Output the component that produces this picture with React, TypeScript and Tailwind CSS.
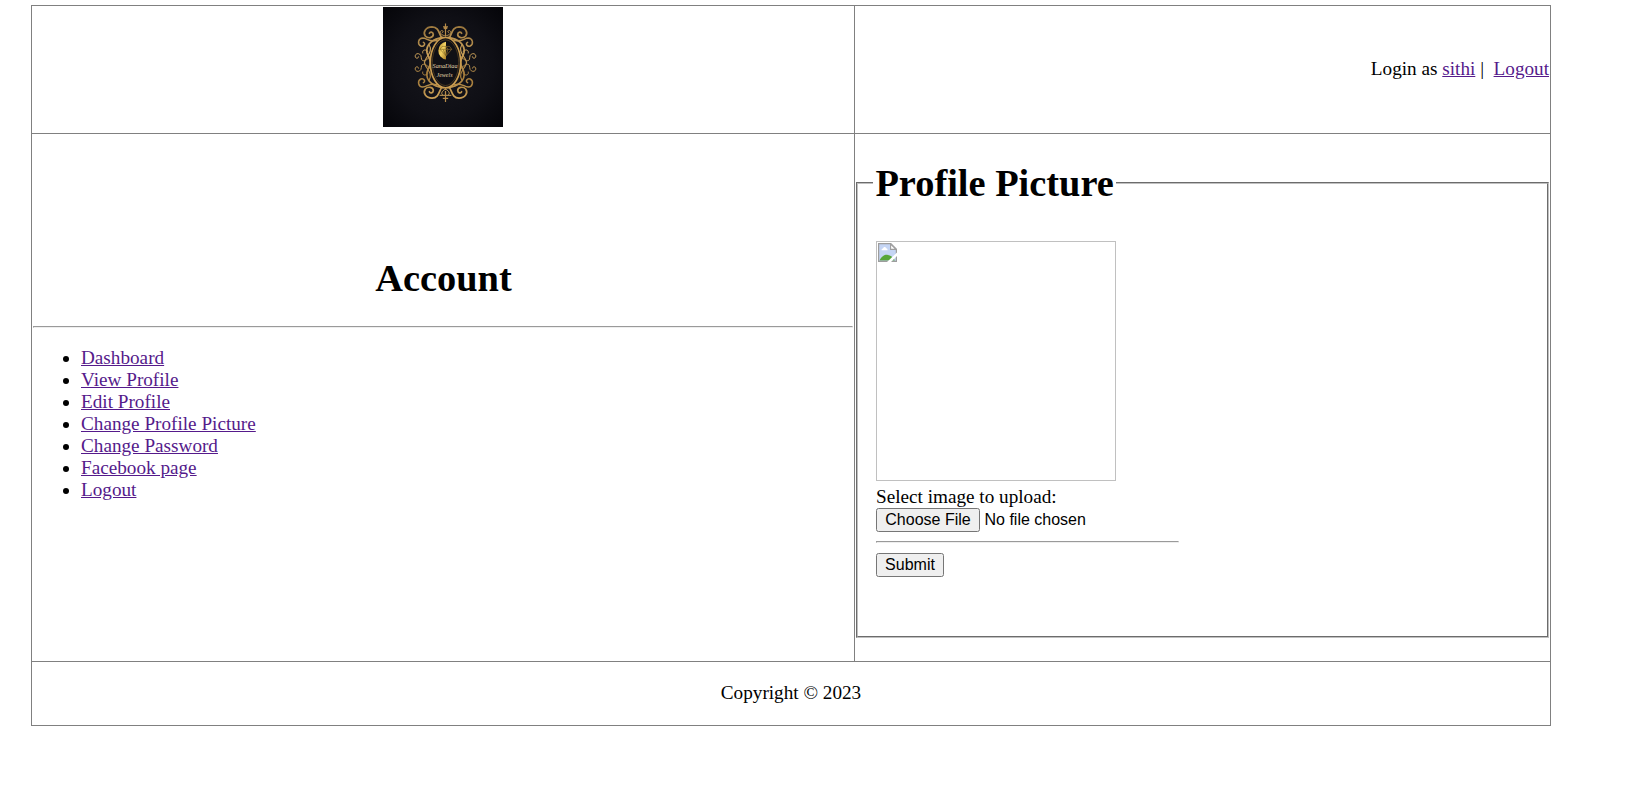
import React from "react";

const LINKS = [
  "Dashboard",
  "View Profile",
  "Edit Profile",
  "Change Profile Picture",
  "Change Password",
  "Facebook page",
  "Logout",
];

function Scrollwork() {
  return (
    <g fill="none" stroke="url(#gold)" strokeLinecap="round">
      {/* top corner curl */}
      <path strokeWidth="1.7" d="M59 31 C56 28 56.5 20 49 19.8 C43 19.8 39.5 25 42.3 29 C45 32 50.4 30.8 50.3 27.3 C50 24.6 47 24.5 46.4 26.3" />
      {/* shoulder curl */}
      <path strokeWidth="1.5" d="M54 33 C47 36 44 31 39.8 31 C35 31.3 34.2 37.2 37.8 39 C41 40 43 36.6 40.4 35.3" />
      <path strokeWidth="1.7" d="M60 30.3 C50 31.5 42.5 37.5 44 45.5 C45.2 50 47.3 52 47.3 55.5 C47.3 59 45.2 61 44 65.5 C42.5 73.5 50 79.5 60 80.7" />
      <path strokeWidth="1.2" d="M46 37.5 C51 45 41.5 50.5 41.5 55.5 C41.5 60.5 51 66 46 73.5" />
      {/* middle curls */}
      <path strokeWidth="1" d="M47 49.5 C42 55.5 38 54.5 38.3 50.5 C38.3 46.2 33 45.2 32.2 48.8 C32 51.8 35.5 52 35.6 49.8" />
      <path strokeWidth="1" d="M47 61.5 C42 55.5 38 56.5 38.3 60.5 C38.3 64.8 33 65.8 32.2 62.2 C32 59.2 35.5 59 35.6 61.2" />
      <path strokeWidth="1" d="M45 44.5 C42 41.5 39 43 39.7 46 M45 66.5 C42 69.5 39 68 39.7 65" />
      {/* lower curls */}
      <path strokeWidth="1.5" d="M54 78 C47 75 44 80 39.8 80 C35 79.7 34.2 73.8 37.8 72 C41 71 43 74.4 40.4 75.7" />
      <path strokeWidth="1.7" d="M59 80 C56 83 56.5 91 49 91.2 C43 91.2 39.5 86 42.3 82 C45 79 50.4 80.2 50.3 83.7 C50 86.4 47 86.5 46.4 84.7" />
      {/* crown curls */}
      <path strokeWidth="1" d="M62.7 29 C57 28 56 24.5 58.5 23.6 C60.5 23.2 60.6 25.6 59.3 25.6 M62.7 82 C59 83.5 57.5 87 59.5 87.8 M57 88.3 H62.7" />
    </g>
  );
}

function Logo() {
  return (
    <svg className="block" width="120" height="120" viewBox="0 0 120 120" role="img" aria-label="Jewels">
      <defs>
        <radialGradient id="backdrop" cx="50%" cy="50%" r="70%">
          <stop offset="0" stopColor="#17171d" />
          <stop offset="0.6" stopColor="#0f0f15" />
          <stop offset="1" stopColor="#050509" />
        </radialGradient>
        <linearGradient id="gold" gradientUnits="userSpaceOnUse" x1="30" y1="20" x2="66" y2="95">
          <stop offset="0" stopColor="#8c6a34" />
          <stop offset="0.35" stopColor="#c9a05a" />
          <stop offset="0.6" stopColor="#a57c3b" />
          <stop offset="1" stopColor="#dcb164" />
        </linearGradient>
        <linearGradient id="moon" x1="0" y1="0" x2="1" y2="1">
          <stop offset="0" stopColor="#b48a25" />
          <stop offset="0.5" stopColor="#f3d264" />
          <stop offset="1" stopColor="#a77c22" />
        </linearGradient>
      </defs>
      <rect width="120" height="120" fill="url(#backdrop)" />
      <Scrollwork />
      <g transform="matrix(-1 0 0 1 125 0)">
        <Scrollwork />
      </g>
      <ellipse cx="62.5" cy="55.7" rx="15.2" ry="25.2" fill="#101015" stroke="#c99c50" strokeWidth="1.7" />
      <ellipse cx="62.5" cy="55.7" rx="13.2" ry="22.8" fill="none" stroke="#6c5127" strokeWidth="0.6" />
      <path d="M62.5 16.5 V29 M60 19.8 H65 M61 22 L62.5 19.5 L64 22 M62.5 84 V95 M59.8 91.3 H65.2" stroke="#b68b4a" strokeWidth="1.2" fill="none" />
      <path d="M63 34.8 A9 9 0 0 0 63 52.6 Z" fill="url(#moon)" />
      <path d="M57 42.3 L59 39.4 H63 V48.7 Z M57 42.3 H63 M60 42.3 L63 48.7" fill="none" stroke="#6b5518" strokeWidth="0.5" />
      <path d="M63 39.4 H66.5 L68.7 42.3 L63 48.7 M63 42.3 H68.7 M63 39.4 L65 42.3 L63 48.7" fill="none" stroke="#8c6b2e" strokeWidth="0.7" />
      <text x="62" y="61.2" textAnchor="middle" textLength="25" lengthAdjust="spacingAndGlyphs" className="fill-[#e2d6ad] font-['Liberation_Serif',serif] text-[6.2px] italic">SanaDiaa</text>
      <text x="61.5" y="69.6" textAnchor="middle" textLength="16" lengthAdjust="spacingAndGlyphs" className="fill-[#e2d6ad] font-['Liberation_Serif',serif] text-[6px] italic">Jewels</text>
    </svg>
  );
}

function BrokenImage() {
  return (
    <div className="h-[240px] w-[240px] border border-[#c0c0c0] p-px">
      <svg className="block" width="19" height="19" viewBox="0 0 19 19" aria-hidden="true">
        <path d="M0.5 0.5 H13 L18.5 6 V18.5 H0.5 Z" fill="#c5d5f4" />
        <path d="M3.5 7.2 C3.5 5.5 5 5.7 5.2 5 C5.7 3.6 7.8 3.7 8 5.2 C9.5 5 9.6 6.8 9.6 7.2 Z" fill="#fff" />
        <path d="M1.5 17.5 C3 13.5 6.5 11.7 8.5 11.7 C12 11.7 15 14 17 17.5 Z" fill="#57a639" />
        <path d="M0.6 0.6 H12.8 L18.4 6.2 V18.4 H0.6 Z" fill="none" stroke="#9d9d9d" strokeWidth="1.2" />
        <path d="M12.6 1 V6.4 H18 Z" fill="#fff" stroke="#9d9d9d" strokeWidth="1.1" />
        <path d="M19 9.5 V13 L13 19 H9 Z" fill="#fff" />
      </svg>
    </div>
  );
}

function Rule() {
  return <hr className="h-[2px] border border-t-[#9a9a9a] border-r-[#eee] border-b-[#eee] border-l-[#9a9a9a]" />;
}

function GrayButton({ children, className }: { children: React.ReactNode; className: string }) {
  return (
    <button
      type="button"
      className={`flex h-6 items-center justify-center rounded-[2.5px] border border-[#767676] bg-[#efefef] font-['Liberation_Sans',Arial,sans-serif] text-[16px] leading-[18px] text-black ${className}`}
    >
      {children}
    </button>
  );
}

function Link({ children }: { children: React.ReactNode }) {
  return <a href="#" className="text-[#551a8b] underline">{children}</a>;
}

export default function App() {
  return (
    <div className="min-h-[787px] bg-white pt-[5px] pl-[31px] font-['Liberation_Serif','Times_New_Roman',serif] text-[19.2px] leading-[22px] text-black">
      <div className="grid w-[1520px] grid-cols-[822px_695px] grid-rows-[127px_527px_63px] gap-px border border-[#808080] bg-[#808080]">
        <header className="flex justify-center bg-white pt-px">
          <Logo />
        </header>

        <div className="flex items-center justify-end bg-white pr-px pb-[2px]">
          <p>
            Login as <Link>sithi</Link> |&nbsp; <Link>Logout</Link>
          </p>
        </div>

        <nav className="bg-white px-px pt-[122px]">
          <h1 className="pl-px text-center text-[38.4px] leading-[44px] font-bold">Account</h1>
          <div className="pt-[26px]">
            <Rule />
          </div>
          <ul className="list-disc pt-[19px] pl-12">
            {LINKS.map((label) => (
              <li key={label}>
                <Link>{label}</Link>
              </li>
            ))}
          </ul>
        </nav>

        <main className="bg-white px-px pt-[27px]">
          <fieldset className="h-[477px] border-2 border-[#c0c0c0] pl-[18px] [border-style:groove]">
            <legend className="-ml-[3px] pr-[2.6px] pl-[2.4px] text-[38.4px] leading-[44px] font-bold">Profile Picture</legend>
            <div className="pt-9">
              <BrokenImage />
              <p className="pt-[5px]">Select image to upload:</p>
              <div className="flex items-center gap-[4.5px]">
                <GrayButton className="w-[104px]">Choose File</GrayButton>
                <span className="font-['Liberation_Sans',Arial,sans-serif] text-[16px]">No file chosen</span>
              </div>
              <div className="w-[303px] py-[9px]">
                <Rule />
              </div>
              <GrayButton className="mt-px w-[68px]">Submit</GrayButton>
            </div>
          </fieldset>
        </main>

        <footer className="col-span-2 flex items-center justify-center bg-white pb-[2px]">
          <p>Copyright © 2023</p>
        </footer>
      </div>
    </div>
  );
}
